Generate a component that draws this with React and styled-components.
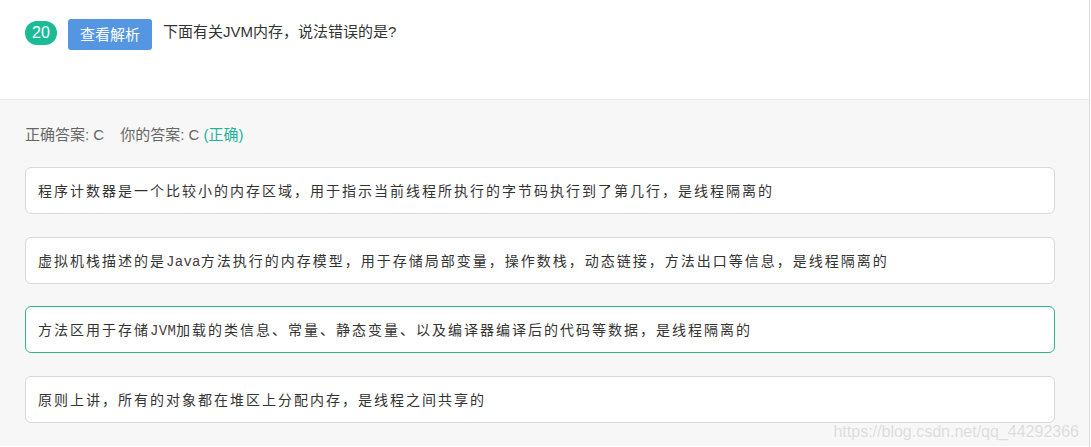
import React from 'react'
import styled, { createGlobalStyle } from 'styled-components'

const GlobalStyle = createGlobalStyle`
  html, body {
    margin: 0;
    padding: 0;
    background: #fff;
  }
  body {
    font-family: "Liberation Sans", "Noto Sans CJK SC", Arial, sans-serif;
    color: #333;
  }
`

const Page = styled.div`
  position: relative;
  width: 1089px;
  height: 447px;
  border-right: 1px solid #dcdcdc;
  overflow: hidden;
`

const Header = styled.div`
  height: 100px;
  box-sizing: border-box;
  padding: 19px 25px 0;
  display: flex;
  align-items: flex-start;
  background: #fff;
  border-bottom: 1px solid #e8e8e8;
`

const Badge = styled.span`
  margin-top: 2px;
  width: 32px;
  height: 24px;
  border-radius: 12px;
  background: #1cbb97;
  color: #fff;
  font-size: 16px;
  line-height: 24px;
  text-align: center;
`

const Button = styled.button`
  margin-left: 11px;
  height: 31px;
  padding: 0 12px;
  border: none;
  border-radius: 3px;
  background: #5596e2;
  color: #fff;
  font-family: "Liberation Sans", "Noto Sans CJK SC", sans-serif;
  font-size: 15px;
  line-height: 31px;
`

const Title = styled.div`
  margin-left: 11px;
  font-size: 15px;
  line-height: 26px;
  color: #333;
`

const Body = styled.div`
  background: #f7f7f7;
  height: 346px;
  box-sizing: border-box;
  padding: 25px 34px 0 25px;
`

const Answer = styled.div`
  font-size: 15px;
  line-height: 20px;
  color: #666;
  margin-bottom: 22px;
`

const Gap = styled.span`
  display: inline-block;
  width: 16px;
`

const Right = styled.span`
  color: #1fb597;
`

const Options = styled.div`
  display: flex;
  flex-direction: column;
  gap: 22.5px;
`

const Option = styled.div`
  background: #fff;
  border: 1px solid ${p => (p.$selected ? '#2db592' : '#d9d9d9')};
  border-radius: 6px;
  padding: 12px 12px;
  height: 21px;
  font-family: "Noto Sans CJK SC", "Liberation Sans", sans-serif;
  font-size: 14px;
  line-height: 21px;
  letter-spacing: 2px;
  color: #333;
`

const Code = styled.span`
  font-family: "Liberation Mono", "DejaVu Sans Mono", "Courier New", monospace;
  font-size: 14px;
  line-height: 0;
  letter-spacing: 0.3px;
  color: #4a4040;
`

const Watermark = styled.div`
  position: absolute;
  right: 10px;
  bottom: 6px;
  font-family: "Liberation Sans", Arial, sans-serif;
  font-size: 16px;
  color: #dcdcdc;
  text-shadow: 0 0 1px #fff;
`

const App = () => {
  return (
    <>
      <GlobalStyle />
      <Page>
        <Header>
          <Badge>20</Badge>
          <Button>查看解析</Button>
          <Title>下面有关JVM内存，说法错误的是?</Title>
        </Header>
        <Body>
          <Answer>
            正确答案: C<Gap />你的答案: C <Right>(正确)</Right>
          </Answer>
          <Options>
            <Option>
              程序计数器是一个比较小的内存区域，用于指示当前线程所执行的字节码执行到了第几行，是线程隔离的
            </Option>
            <Option>
              虚拟机栈描述的是<Code>Java</Code>方法执行的内存模型，用于存储局部变量，操作数栈，动态链接，方法出口等信息，是线程隔离的
            </Option>
            <Option $selected>
              方法区用于存储<Code>JVM</Code>加载的类信息、常量、静态变量、以及编译器编译后的代码等数据，是线程隔离的
            </Option>
            <Option>
              原则上讲，所有的对象都在堆区上分配内存，是线程之间共享的
            </Option>
          </Options>
        </Body>
        <Watermark>https://blog.csdn.net/qq_44292366</Watermark>
      </Page>
    </>
  )
}

export default App
